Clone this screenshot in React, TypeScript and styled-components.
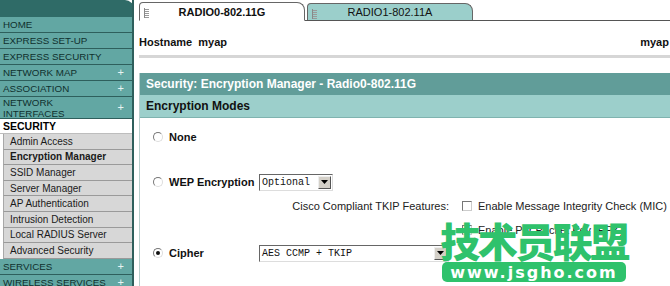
import React from "react";
import styled, { createGlobalStyle } from "styled-components";

const Global = createGlobalStyle`
  html, body { margin: 0; padding: 0; background: #fff; }
  body { font-family: "Liberation Sans", Arial, sans-serif; }
  #root { width: 670px; height: 286px; overflow: hidden; position: relative; }
`;

const Page = styled.div`
  display: flex;
  width: 670px;
  height: 286px;
  overflow: hidden;
  position: relative;
`;

/* ---------- Sidebar ---------- */
const Sidebar = styled.nav`
  flex: 0 0 134px;
  display: flex;
  flex-direction: column;
  border-right: 2px solid #2e5f5c;
  box-sizing: border-box;
  overflow: hidden;
  & > * { flex-shrink: 0; }
`;

const SideHead = styled.div`
  height: 17px;
  background: #2f6b67;
  border-top-right-radius: 9px;
  margin-right: -2px;
`;

const NavItem = styled.div<{ $h?: number }>`
  height: ${(p) => p.$h ?? 15}px;
  box-sizing: content-box;
  border-bottom: 1px solid #2e5f5c;
  background: #62a7a3;
  color: #10302e;
  font-size: 9.8px;
  line-height: 11px;
  padding-left: 3px;
  padding-right: 8px;
  display: flex;
  align-items: center;
  justify-content: space-between;
  text-transform: uppercase;
  white-space: nowrap;
`;

const SectionItem = styled.div`
  height: 14px;
  border-bottom: 1px solid #bdbdbd;
  background: #fff;
  color: #000;
  font-weight: bold;
  font-size: 10.5px;
  padding-left: 3px;
  display: flex;
  align-items: center;
`;

const SubItem = styled.div<{ $active?: boolean }>`
  height: 14.6px;
  margin-left: 3px;
  border-bottom: 1px solid #9a9a9a;
  border-left: 1px solid #a8a8a8;
  background: #d7d7d7;
  color: #1a1a1a;
  font-size: 10px;
  font-weight: ${(p) => (p.$active ? "bold" : "normal")};
  padding-left: 6px;
  display: flex;
  align-items: center;
  white-space: nowrap;
`;

const Plus = styled.span`
  color: #e8f4f3;
  font-size: 11px;
`;

/* ---------- Main ---------- */
const Main = styled.div`
  flex: 1;
  display: flex;
  flex-direction: column;
  padding-left: 5px;
  min-width: 0;
`;

const TabBar = styled.div`
  height: 20px;
  display: flex;
  align-items: flex-end;
  border-bottom: 1px solid #555;
  box-sizing: content-box;
`;

const Tab = styled.div<{ $active?: boolean }>`
  position: relative;
  width: 166px;
  height: ${(p) => (p.$active ? 19 : 17)}px;
  box-sizing: border-box;
  border: 1px solid #666;
  border-bottom: ${(p) => (p.$active ? "1px solid #fff" : "none")};
  margin-bottom: ${(p) => (p.$active ? -1 : 0)}px;
  border-radius: 4px 8px 0 0;
  background: ${(p) => (p.$active ? "#fff" : "#9bcfcb")};
  color: #111;
  font-size: 11px;
  font-weight: ${(p) => (p.$active ? "bold" : "normal")};
  display: flex;
  align-items: center;
  justify-content: center;
  margin-right: 2px;
`;

const Grip = styled.svg`
  position: absolute;
  left: 4px;
  top: 5px;
`;

const HostRow = styled.div`
  height: 19px;
  padding-top: 15px;
  line-height: 13px;
  display: flex;
  align-items: flex-start;
  justify-content: space-between;
  font-size: 11px;
  font-weight: bold;
  color: #111;
  border-bottom: 3px solid #d6d6d6;
  margin-right: -38px;
  white-space: nowrap;
`;

const Panel = styled.section`
  margin-top: 15px;
  border-left: 1px solid #b8cfcd;
  flex: 1;
  display: flex;
  flex-direction: column;
  margin-right: -20px;
`;

const PanelTitle = styled.div`
  height: 22px;
  background: #619d99;
  color: #fff;
  font-weight: bold;
  font-size: 12px;
  display: flex;
  align-items: center;
  padding-left: 6px;
`;

const PanelSub = styled.div`
  height: 22px;
  background: #9ccfcb;
  border-bottom: 1px solid #7fb3af;
  color: #111;
  font-weight: bold;
  font-size: 12px;
  display: flex;
  align-items: center;
  padding-left: 6px;
`;

const Body = styled.div`
  display: flex;
  flex-direction: column;
  padding-top: 8px;
  padding-left: 13px;
`;

const ModeRow = styled.div<{ $h: number; $mt?: number }>`
  height: ${(p) => p.$h}px;
  margin-top: ${(p) => p.$mt ?? 0}px;
  display: grid;
  grid-template-columns: 106px auto;
  align-items: center;
`;

const ModeLabel = styled.label`
  display: flex;
  align-items: center;
  gap: 6px;
  font-weight: bold;
  font-size: 11px;
  color: #111;
  white-space: nowrap;
`;

const Radio = styled.span<{ $on?: boolean }>`
  width: 10px;
  height: 10px;
  flex-shrink: 0;
  border-radius: 50%;
  box-sizing: border-box;
  border: 1px solid;
  border-color: #777 #ddd #ddd #777;
  background: #fff;
  display: inline-flex;
  align-items: center;
  justify-content: center;
  &::after {
    content: "";
    width: 4px;
    height: 4px;
    border-radius: 50%;
    background: ${(p) => (p.$on ? "#111" : "transparent")};
  }
`;

const SelectBox = styled.div<{ $w: number }>`
  width: ${(p) => p.$w}px;
  height: 17px;
  box-sizing: border-box;
  border: 1px solid;
  border-color: #666 #ddd #ddd #666;
  background: #fff;
  display: flex;
  align-items: center;
  justify-content: space-between;
  font-family: "Liberation Mono", monospace;
  font-size: 10px;
  color: #111;
  padding-left: 2px;
`;

const Arrow = styled.span`
  width: 13px;
  height: 13px;
  margin-right: 1px;
  background: #d4d0c8;
  border: 1px solid;
  border-color: #eee #555 #555 #eee;
  box-sizing: border-box;
  display: flex;
  align-items: center;
  justify-content: center;
`;

const FeatureRow = styled.div<{ $mt?: number }>`
  height: 24px;
  margin-top: ${(p) => p.$mt ?? 0}px;
  display: grid;
  grid-template-columns: 304px 11px auto;
  column-gap: 5px;
  align-items: center;
  font-size: 11px;
  color: #222;
  white-space: nowrap;
`;

const FeatureLabel = styled.span`
  text-align: right;
  padding-right: 8px;
`;

const Check = styled.span`
  width: 10px;
  height: 10px;
  box-sizing: border-box;
  border: 1px solid;
  border-color: #777 #ccc #ccc #777;
  background: #fff;
`;

/* ---------- Watermark overlay ---------- */
const Watermark = styled.div`
  position: absolute;
  left: 440px;
  top: 218px;
  width: 188px;
  display: flex;
  flex-direction: column;
  align-items: center;
  pointer-events: none;
`;

const WmTitle = styled.div`
  font-family: "Noto Sans CJK SC", sans-serif;
  font-weight: 900;
  font-size: 40px;
  line-height: 44px;
  color: #2fc26c;
  letter-spacing: -2.5px;
  white-space: nowrap;
`;

const WmPill = styled.div`
  width: 184px;
  height: 20px;
  border-radius: 5px;
  background: #2fc26c;
  color: #fff;
  font-family: "DejaVu Sans", sans-serif;
  font-weight: bold;
  font-size: 16px;
  letter-spacing: 2px;
  display: flex;
  align-items: center;
  justify-content: center;
`;

const GripIcon = () => (
  <Grip width="6" height="10" viewBox="0 0 6 10">
    <rect x="0" y="0" width="1" height="10" fill="#888" />
    {[1, 3, 5, 7, 9].map((y) => (
      <rect key={y} x="1" y={y} width="4" height="1" fill="#999" />
    ))}
  </Grip>
);

const DownArrow = () => (
  <svg width="7" height="4" viewBox="0 0 7 4">
    <path d="M0 0h7L3.5 4z" fill="#000" />
  </svg>
);

const mainTop = ["Home", "Express Set-up", "Express Security"];
const subs = [
  "Admin Access",
  "Encryption Manager",
  "SSID Manager",
  "Server Manager",
  "AP Authentication",
  "Intrusion Detection",
  "Local RADIUS Server",
  "Advanced Security",
];

export default function App() {
  return (
    <>
      <Global />
      <Page>
        <Sidebar>
          <SideHead />
          {mainTop.map((t) => (
            <NavItem key={t}>{t}</NavItem>
          ))}
          <NavItem>
            Network Map<Plus>+</Plus>
          </NavItem>
          <NavItem>
            Association<Plus>+</Plus>
          </NavItem>
          <NavItem $h={21}>
            <span>
              Network
              <br />
              Interfaces
            </span>
            <Plus>+</Plus>
          </NavItem>
          <SectionItem>SECURITY</SectionItem>
          {subs.map((s) => (
            <SubItem key={s} $active={s === "Encryption Manager"}>
              {s}
            </SubItem>
          ))}
          <NavItem>
            Services<Plus>+</Plus>
          </NavItem>
          <NavItem>
            Wireless Services<Plus>+</Plus>
          </NavItem>
        </Sidebar>

        <Main>
          <TabBar>
            <Tab $active>
              <GripIcon />
              RADIO0-802.11G
            </Tab>
            <Tab>
              <GripIcon />
              RADIO1-802.11A
            </Tab>
          </TabBar>
          <HostRow>
            <span>Hostname&nbsp; myap</span>
            <span>myap uptime</span>
          </HostRow>
          <Panel>
            <PanelTitle>Security: Encryption Manager - Radio0-802.11G</PanelTitle>
            <PanelSub>Encryption Modes</PanelSub>
            <Body>
              <ModeRow $h={22}>
                <ModeLabel>
                  <Radio />
                  None
                </ModeLabel>
              </ModeRow>
              <ModeRow $h={18} $mt={25}>
                <ModeLabel>
                  <Radio />
                  WEP Encryption
                </ModeLabel>
                <SelectBox $w={74}>
                  Optional
                  <Arrow>
                    <DownArrow />
                  </Arrow>
                </SelectBox>
              </ModeRow>
              <FeatureRow $mt={3}>
                <FeatureLabel>Cisco Compliant TKIP Features:</FeatureLabel>
                <Check />
                <span>Enable Message Integrity Check (MIC)</span>
              </FeatureRow>
              <FeatureRow>
                <span />
                <Check />
                <span>Enable Per Packet Key (PPK)</span>
              </FeatureRow>
              <ModeRow $h={18} $mt={2}>
                <ModeLabel>
                  <Radio $on />
                  Cipher
                </ModeLabel>
                <SelectBox $w={190}>
                  AES CCMP + TKIP
                  <Arrow>
                    <DownArrow />
                  </Arrow>
                </SelectBox>
              </ModeRow>
            </Body>
          </Panel>
        </Main>

        <Watermark>
          <WmTitle>技术员联盟</WmTitle>
          <WmPill>www.jsgho.com</WmPill>
        </Watermark>
      </Page>
    </>
  );
}
